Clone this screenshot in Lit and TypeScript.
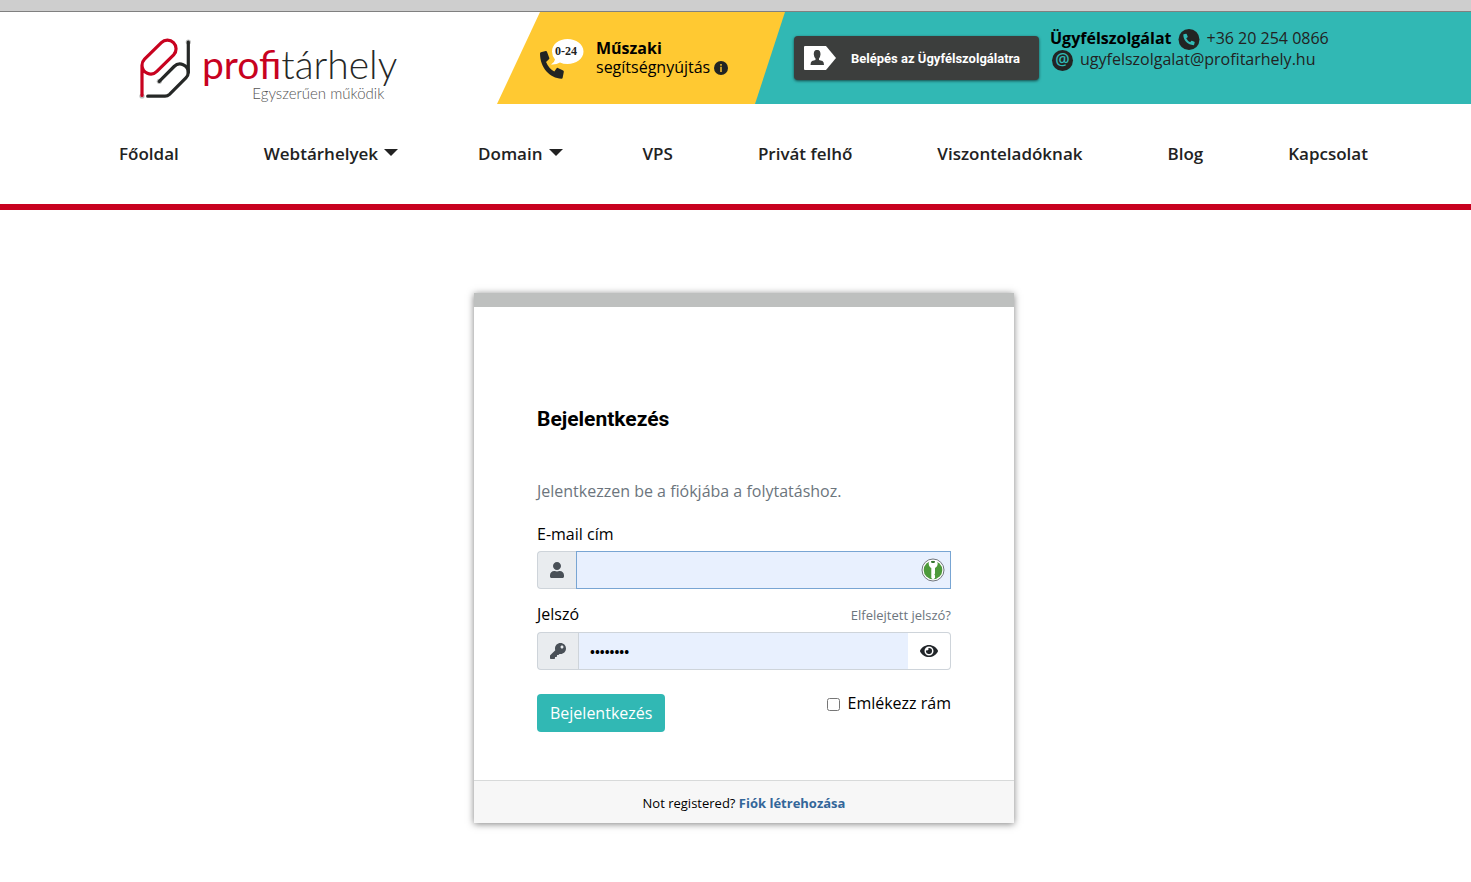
import { LitElement, html, css, svg } from "lit";
import { customElement, state } from "lit/decorators.js";

interface NavItem {
  label: string;
  menu?: boolean;
}

const NAV: NavItem[] = [
  { label: "Főoldal" },
  { label: "Webtárhelyek", menu: true },
  { label: "Domain", menu: true },
  { label: "VPS" },
  { label: "Privát felhő" },
  { label: "Viszonteladóknak" },
  { label: "Blog" },
  { label: "Kapcsolat" },
];

const PHONE = svg`<path d="M497.39 361.8l-112-48a24 24 0 0 0-28 6.9l-49.6 60.6A370.66 370.66 0 0 1 130.6 204.11l60.6-49.6a23.94 23.94 0 0 0 6.9-28l-48-112A24.16 24.16 0 0 0 122.6.61l-104 24A24 24 0 0 0 0 48c0 256.5 207.9 464 464 464a24 24 0 0 0 23.4-18.6l24-104a24.29 24.29 0 0 0-14.01-27.6z"/>`;

@customElement("site-header")
export class SiteHeader extends LitElement {
  static styles = css`
    :host { display: block; font-family: "Open Sans", "Noto Sans", sans-serif; font-size: 16px; color: #222; }
    a { color: inherit; text-decoration: none; }
    .strip { height: 11px; background: #cecece; border-bottom: 1px solid #808080; }
    .banner { display: flex; height: 92px; }
    .brand { flex: 0 0 497px; box-sizing: border-box; padding: 26px 0 0 139px; }
    .logo { display: flex; align-items: flex-start; }
    .mark { display: block; width: 52px; height: 62px; flex: none; overflow: visible; }
    .wordmark { display: flex; flex-direction: column; margin-left: 11px; font-family: Lato, sans-serif; }
    .name { font-size: 39px; line-height: 48px; padding-top: 2px; margin-bottom: -4px; font-weight: 300; color: #262827; white-space: nowrap; }
    .name b { font-weight: 400; color: #c8021f; }
    .slogan { font-size: 15px; line-height: 18px; font-weight: 300; color: #555; align-self: flex-end; margin-right: 13px; }
    .support {
      flex: 0 0 288px; box-sizing: border-box; display: flex; align-items: flex-start; padding: 26px 0 0 43px;
      background: #ffc932; clip-path: polygon(43px 0, 100% 0, 100% 100%, 0 100%); color: #000;
    }
    .support svg.call { width: 44px; height: 42px; flex: none; }
    .supportText { margin-left: 12px; line-height: 19px; white-space: nowrap; }
    .supportText b { display: block; line-height: 20px; }
    .info { width: 14px; height: 14px; vertical-align: -2px; fill: #222423; }
    .service {
      flex: 1; min-width: 0; margin-left: -30px; box-sizing: border-box; display: flex; align-items: flex-start;
      padding-left: 39px; background: #31b8b4; clip-path: polygon(30px 0, 100% 0, 100% 100%, 0 100%);
    }
    .login {
      display: flex; align-items: center; flex: none; margin-top: 24px; height: 44px; width: 245px; padding: 0 10px;
      border: 0; border-radius: 4px; background: #3c3e3d; box-shadow: 0 1px 3px rgba(0, 0, 0, 0.6);
      color: #fff; font: 700 13px Roboto, "Open Sans", sans-serif; white-space: nowrap; cursor: pointer;
    }
    .login svg { width: 32px; height: 24px; margin-right: 15px; flex: none; }
    .contact { margin: 16px 0 0 11px; line-height: 21px; white-space: nowrap; }
    .row { display: flex; align-items: center; }
    .row b { color: #000; margin-right: 7px; }
    .disc { width: 21px; height: 21px; margin-right: 7px; flex: none; overflow: visible; }
    .mail { padding-left: 2px; }
    .nav { padding: 39px 86px 39px 119px; border-bottom: 6px solid #c8021f; }
    .menu {
      list-style: none; margin: 0 17px 0 0; padding: 0; display: flex; justify-content: space-between;
      font-size: 17px; line-height: 22px; font-weight: 600; white-space: nowrap;
    }
    .caret {
      display: inline-block; border: 7px solid transparent; border-top-color: #222; border-bottom: 0;
      margin: 0 -5px 0 6px; vertical-align: 4px;
    }
  `;

  render() {
    return html`
      <div class="strip"></div>
      <header class="banner">
        <div class="brand">
          <a class="logo" href="#" aria-label="profitárhely">
            <svg class="mark" viewBox="0 0 52 62" fill="none" stroke-width="3.200" stroke-linecap="round">
              <circle cx="3" cy="58" r="2.600" fill="#bbb" /><circle cx="49.300" cy="4" r="2.600" fill="#bbb" />
              <circle cx="20.300" cy="43.300" r="2.600" fill="#bbb" />
              <path stroke="#262827" d="M49.300 4V34A8.300 8.300 0 0 1 46.900 39.900L30.500 56.300Q28.500 58.200 26 58.200H8.700" />
              <path stroke="#262827" d="M20.300 43.300L35.100 28.500A8.300 8.300 0 0 1 49.300 34.300" />
              <path stroke="#c8021f" d="M3 57.500V27.300A8.700 8.700 0 0 1 5.550 21.150L22.350 4.550A8.700 8.700 0 0 1 34.650 16.850L17.850 33.450A8.700 8.700 0 0 1 3 27.300" />
            </svg>
            <span class="wordmark">
              <span class="name"><b>profi</b>tárhely</span>
              <span class="slogan">Egyszerűen működik</span>
            </span>
          </a>
        </div>
        <div class="support">
          <svg class="call" viewBox="0 0 44 42">
            <g transform="translate(0 13) scale(.0465 .054)" fill="#222423">${PHONE}</g>
            <path fill="#fff" d="M27.500 1C36 1 43.500 6 43.500 13.500S36 26 27.500 26Q23 26 20 24.500Q16 27 11 26.500Q14.500 24.500 15 21.500Q12 18 12 13.500C12 6 19 1 27.500 1Z" />
            <text x="26" y="17" text-anchor="middle" font-family="Liberation Serif, serif" font-weight="700" font-size="12" fill="#222">0-24</text>
          </svg>
          <div class="supportText">
            <b>Műszaki</b>
            segítségnyújtás
            <svg class="info" viewBox="0 0 14 14" role="img" aria-label="info">
              <circle cx="7" cy="7" r="7" />
              <path fill="#c49a2b" d="M6 3H8V4.800H6ZM6 5.800H8V11H6Z" />
            </svg>
          </div>
        </div>
        <div class="service">
          <button class="login" type="button">
            <svg viewBox="0 0 32 24">
              <path fill="#fff" d="M1 0H22L32 12L22 24H1Q0 24 0 23V1Q0 0 1 0Z" />
              <path fill="#3c3e3d" d="M13 4C16 4 16.500 6 16.500 8.500Q16.300 11 15 12.500V14L18.500 15Q20 15.800 20 19H6.500Q6.500 15.800 8 15L11.500 14V12.500Q10 11 9.800 8.500C9.800 6 10.300 4 13 4Z" />
            </svg>
            Belépés az Ügyfélszolgálatra
          </button>
          <div class="contact">
            <div class="row">
              <b>Ügyfélszolgálat</b>
              <svg class="disc" viewBox="0 0 21 21">
                <circle cx="10" cy="11.500" r="10.500" fill="#222423" />
                <g transform="translate(4.300 5.800) scale(.0222)" fill="#31b8b4">${PHONE}</g>
              </svg>
              <a href="tel:+36202540866">+36 20 254 0866</a>
            </div>
            <div class="row mail">
              <svg class="disc" viewBox="0 0 21 21">
                <circle cx="10.500" cy="11.500" r="10.500" fill="#222423" />
                <text x="10.500" y="16" text-anchor="middle" font-family="Open Sans, sans-serif" font-weight="600" font-size="16" fill="#31b8b4">@</text>
              </svg>
              <a href="mailto:ugyfelszolgalat@profitarhely.hu">ugyfelszolgalat@profitarhely.hu</a>
            </div>
          </div>
        </div>
      </header>
      <nav class="nav">
        <ul class="menu">
          ${NAV.map((item) => html`<li><a href="#">${item.label}${item.menu ? html`<span class="caret"></span>` : ""}</a></li>`)}
        </ul>
      </nav>
    `;
  }
}

@customElement("login-card")
export class LoginCard extends LitElement {
  static styles = css`
    :host { display: block; width: 540px; max-width: 100%; font-family: "Open Sans", "Noto Sans", sans-serif; font-size: 16px; line-height: 24px; color: #000; }
    a { text-decoration: none; }
    .card { border-top: 14px solid #bec0bf; background: #fff; box-shadow: 0 1px 7px rgba(0, 0, 0, 0.5); }
    .body { padding: 96px 63px 48px; }
    .title { margin: 0; font: 700 21px/32px Roboto, "Open Sans", sans-serif; }
    .lead { margin: 44px 0 19px; color: #6c757d; }
    .labels { display: flex; justify-content: space-between; align-items: flex-start; margin-bottom: 5px; }
    .forgot { padding-top: 1px; font-size: 13px; color: #6c757d; }
    .group { display: flex; height: 38px; margin-bottom: 13px; }
    .addon {
      box-sizing: border-box; display: flex; align-items: center; padding: 0 12px; border: 1px solid #ced4da; border-right: 0;
      border-radius: 4px 0 0 4px; background: #e9ecef; fill: #495057;
    }
    .addon svg { height: 16px; display: block; }
    .field { position: relative; display: flex; flex: 1; min-width: 0; }
    .input {
      flex: 1; min-width: 0; box-sizing: border-box; padding: 0 11px; border: 1px solid #ced4da; border-radius: 0;
      background: #e8f0fe; color: #000; font: 16px "Open Sans", sans-serif; outline: none;
    }
    .active { border-color: #78a5d3; }
    .secret { border-right: 0; padding-top: 2px; font-size: 13px; font-weight: 700; }
    .keeper { position: absolute; right: 6px; top: 7px; width: 24px; height: 24px; }
    .reveal {
      display: flex; align-items: center; padding: 0 12px; border: 1px solid #ced4da; border-left: 0;
      border-radius: 0 4px 4px 0; background: #fff; fill: #212529; cursor: pointer;
    }
    .reveal svg { width: 18px; height: 16px; }
    .actions { display: flex; justify-content: space-between; align-items: flex-start; margin-top: 24px; }
    .submit { height: 38px; padding: 0 13px; border: 0; border-radius: 4px; background: #31b8b4; color: #fff; font: 16px "Open Sans", sans-serif; cursor: pointer; }
    .remember { display: flex; align-items: center; line-height: 18px; }
    .remember input { margin: 2px 7px 0 0; width: 13px; height: 13px; }
    .footer { padding: 13px 12px 11px; border-top: 1px solid #d8dada; background: #f7f7f7; font-size: 13px; line-height: 18px; text-align: center; }
    .footer a { font-weight: 700; color: #336699; }
  `;

  @state() private visible = false;

  render() {
    return html`
      <div class="card">
        <form class="body" @submit=${(e: Event) => e.preventDefault()}>
          <h1 class="title">Bejelentkezés</h1>
          <p class="lead">Jelentkezzen be a fiókjába a folytatáshoz.</p>
          <div class="labels"><label for="email">E-mail cím</label></div>
          <div class="group">
            <span class="addon"><svg viewBox="0 0 448 512"><path d="M224 256c70.7 0 128-57.3 128-128S294.7 0 224 0 96 57.3 96 128s57.3 128 128 128zm89.6 32h-16.7c-22.200 10.200-46.900 16-72.900 16s-50.600-5.800-72.900-16h-16.700C60.200 288 0 348.200 0 422.400V464c0 26.500 21.500 48 48 48h352c26.500 0 48-21.500 48-48v-41.600c0-74.200-60.200-134.400-134.400-134.400z" /></svg></span>
            <span class="field">
              <input class="input active" id="email" type="email" />
              <svg class="keeper" viewBox="0 0 24 24">
                <circle cx="12" cy="12" r="11" fill="#fff" stroke="#70757c" />
                <circle cx="12" cy="12" r="9.300" fill="#4d9a3a" />
                <path fill="#fff" d="M8.500 2.500Q7 5 8 7.500Q9 9.500 10.300 10V20L12 21.500L14 20V17.500L13.400 16.500L14 15.500V10Q16 9 16.500 7Q17 4.500 15.500 2.500Z" />
                <path fill="#35752e" d="M10 3H14L13.500 5H10.500Z" />
              </svg>
            </span>
          </div>
          <div class="labels">
            <label for="password">Jelszó</label>
            <a class="forgot" href="#">Elfelejtett jelszó?</a>
          </div>
          <div class="group">
            <span class="addon"><svg viewBox="0 0 512 512"><path d="M512 176.001C512 273.203 433.202 352 336 352c-11.220 0-22.190-1.062-32.827-3.069l-24.012 27.014A23.999 23.999 0 0 1 261.223 384H224v40c0 13.255-10.745 24-24 24h-40v40c0 13.255-10.745 24-24 24H24c-13.255 0-24-10.745-24-24v-78.059c0-6.365 2.529-12.470 7.029-16.971l161.802-161.802C163.108 213.814 160 195.271 160 176 160 78.798 238.797.001 335.999 0 433.488-.001 512 78.511 512 176.001zM336 128c0 26.510 21.490 48 48 48s48-21.490 48-48-21.490-48-48-48-48 21.490-48 48z" /></svg></span>
            <span class="field">
              <input class="input secret" id="password" type=${this.visible ? "text" : "password"} value="password" />
            </span>
            <button class="reveal" type="button" aria-label="Jelszó" @click=${() => (this.visible = !this.visible)}>
              <svg viewBox="0 0 576 512"><path d="M572.520 241.400C518.290 135.590 410.930 64 288 64S57.680 135.640 3.480 241.410a32.350 32.350 0 0 0 0 29.190C57.710 376.410 165.070 448 288 448s230.320-71.640 284.520-177.410a32.350 32.350 0 0 0 0-29.190zM288 400a144 144 0 1 1 144-144 143.930 143.930 0 0 1-144 144zm0-240a95.310 95.310 0 0 0-25.310 3.790 47.850 47.850 0 0 1-66.900 66.900A95.780 95.780 0 1 0 288 160z" /></svg>
            </button>
          </div>
          <div class="actions">
            <button class="submit" type="submit">Bejelentkezés</button>
            <label class="remember"><input type="checkbox" />Emlékezz rám</label>
          </div>
        </form>
        <div class="footer">Not registered? <a href="#">Fiók létrehozása</a></div>
      </div>
    `;
  }
}

@customElement("app-root")
export class AppRoot extends LitElement {
  static styles = css`
    :host { display: block; background: #fff; }
    .main { display: flex; justify-content: center; padding: 83px 0 59px 17px; }
  `;

  render() {
    return html`
      <site-header></site-header>
      <main class="main"><login-card></login-card></main>
    `;
  }
}
